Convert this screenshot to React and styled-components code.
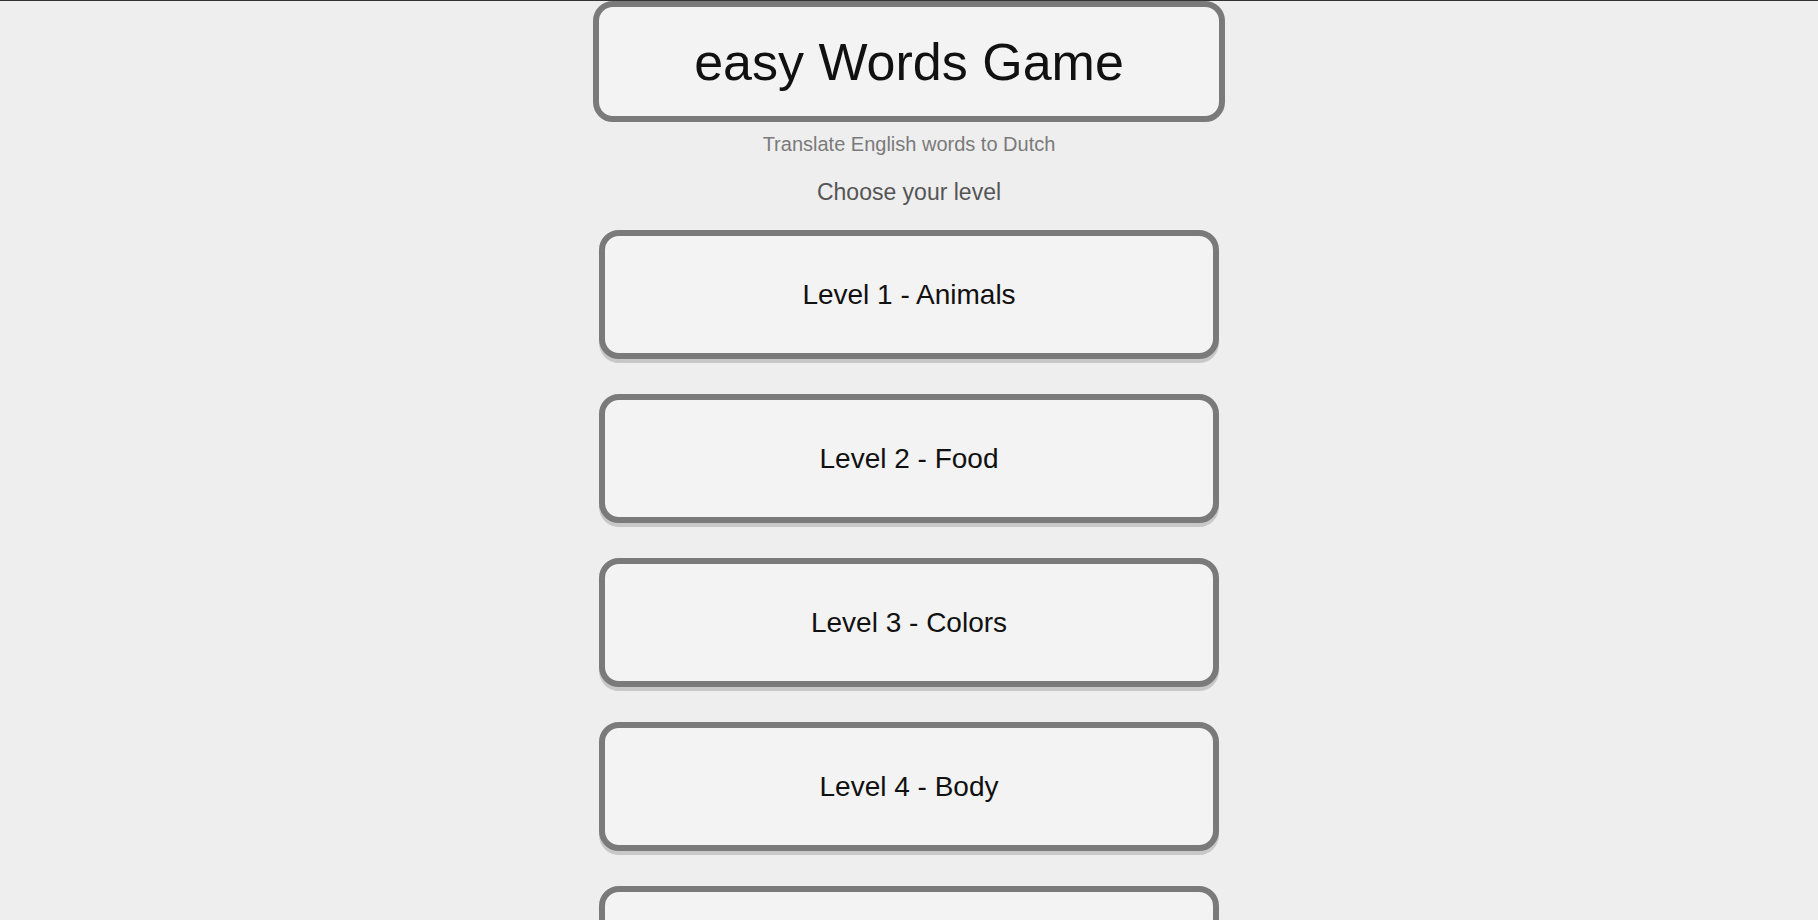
import React from 'react';
import styled, { createGlobalStyle } from 'styled-components';

const GlobalStyle = createGlobalStyle`
  html {
    scrollbar-width: none;
  }

  html::-webkit-scrollbar {
    display: none;
  }

  body {
    margin: 0;
    border-top: 1px solid #333;
    background-color: #eeeeee;
    font-family: "Liberation Sans", Arial, sans-serif;
  }
`;

const GameWrapper = styled.div`
  display: flex;
  flex-direction: column;
  align-items: center;
  padding-bottom: 40px;
`;

const TitleBox = styled.header`
  box-sizing: border-box;
  width: 632px;
  height: 121px;
  display: flex;
  align-items: center;
  justify-content: center;
  background-color: #f3f3f3;
  border: 6px solid #7a7a7a;
  border-radius: 20px;

  h1 {
    margin: 0;
    font-size: 52px;
    font-weight: 400;
    color: #111;
  }
`;

const Subtitle = styled.p`
  margin: 10px 0 0;
  font-size: 20px;
  line-height: 24px;
  color: #7a7a7a;
`;

const Prompt = styled.p`
  margin: 22px 0 0;
  font-size: 23px;
  line-height: 28px;
  color: #555;
`;

const LevelList = styled.div`
  display: flex;
  flex-direction: column;
  gap: 35px;
  margin-top: 24px;
`;

const LevelButton = styled.button`
  box-sizing: border-box;
  width: 620px;
  height: 129px;
  display: flex;
  align-items: center;
  justify-content: center;
  background-color: #f3f3f3;
  border: 6px solid #7a7a7a;
  border-radius: 20px;
  box-shadow: 0 4px 0 #c8c8c8;
  font-family: "Liberation Sans", Arial, sans-serif;
  font-size: 28px;
  color: #111;
  cursor: pointer;
`;

const levels = [
  'Level 1 - Animals',
  'Level 2 - Food',
  'Level 3 - Colors',
  'Level 4 - Body',
  'Level 5 - Numbers',
];

function App() {
  return (
    <>
      <GlobalStyle />
      <GameWrapper>
        <TitleBox>
          <h1>easy Words Game</h1>
        </TitleBox>
        <Subtitle>Translate English words to Dutch</Subtitle>
        <Prompt>Choose your level</Prompt>
        <LevelList>
          {levels.map((level) => (
            <LevelButton type="button" key={level}>
              {level}
            </LevelButton>
          ))}
        </LevelList>
      </GameWrapper>
    </>
  );
}

export default App;
